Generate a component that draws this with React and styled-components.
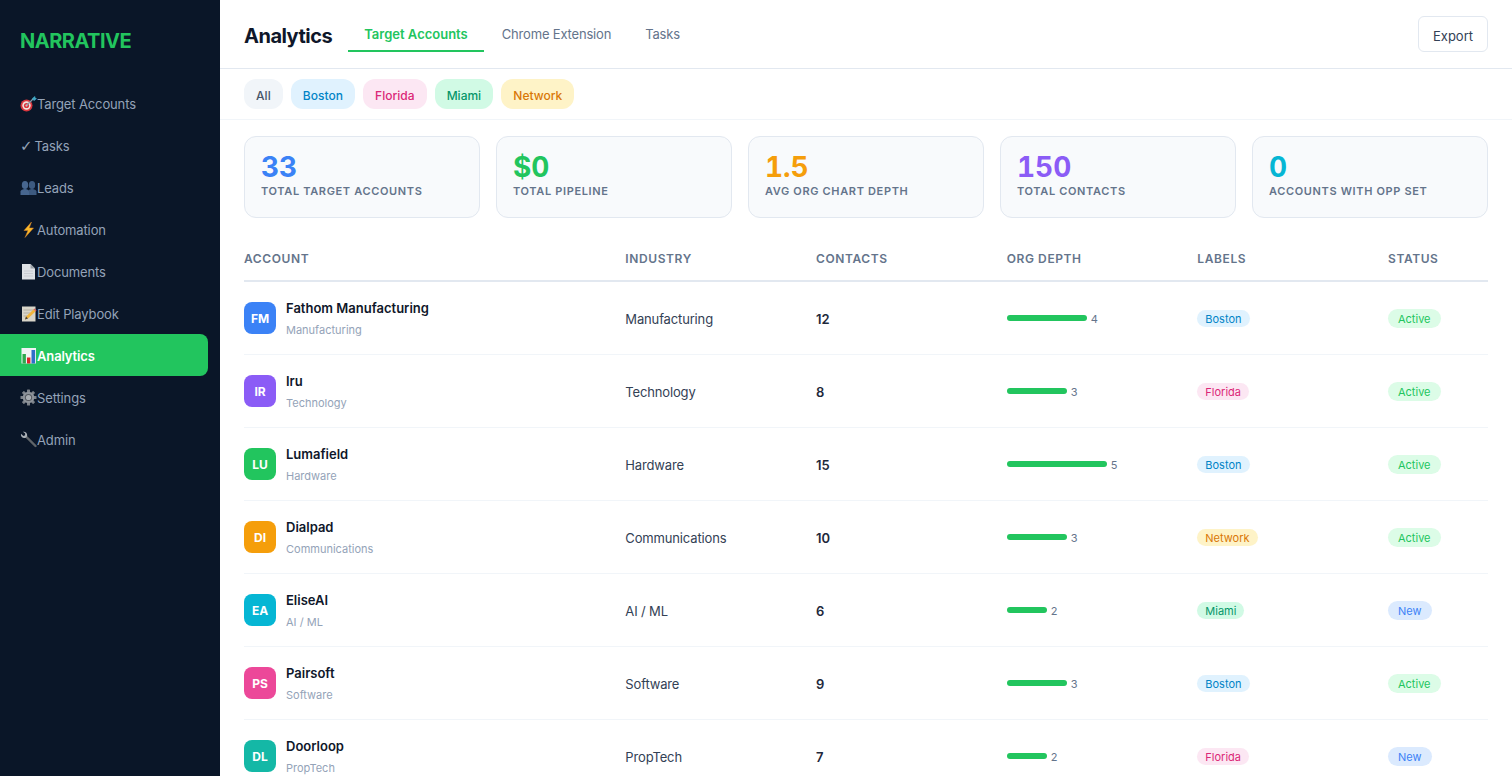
import React from "react";
import styled, { createGlobalStyle } from "styled-components";

const GlobalStyle = createGlobalStyle`
  * { box-sizing: border-box; }
  html, body { margin: 0; padding: 0; height: 100%; overflow: hidden; }
  body {
    font-family: Inter, "Liberation Sans", sans-serif;
    background: #fff;
    color: #0f172a;
  }
`;

const Shell = styled.div`
  display: flex;
  height: 776px;
  overflow: hidden;
`;

const Sidebar = styled.aside`
  width: 220px;
  flex-shrink: 0;
  background: #0a1628;
  padding-top: 24px;
`;

const Logo = styled.div`
  padding: 0 20px;
  height: 34px;
  margin-bottom: 24px;
  display: flex;
  align-items: center;
  font-size: 20px;
  font-weight: 700;
  color: #22c55e;
  letter-spacing: -0.5px;
`;

const NavList = styled.nav`
  display: flex;
  flex-direction: column;
  padding-right: 12px;
`;

const NavItem = styled.a`
  height: 42px;
  padding: 2px 20px 0;
  display: flex;
  align-items: center;
  font-size: 13px;
  letter-spacing: -0.13px;
  font-weight: ${({ $active }) => ($active ? 600 : 400)};
  color: ${({ $active }) => ($active ? "#fff" : "#94a3b8")};
  background: ${({ $active }) => ($active ? "#22c55e" : "transparent")};
  border-radius: ${({ $active }) => ($active ? "0 8px 8px 0" : "0")};
  white-space: pre;
`;

const Emoji = styled.svg`
  width: 17px;
  height: 17px;
  flex-shrink: 0;
  margin-top: -1px;
`;

const Check = styled.span`
  display: inline-block;
  width: 11px;
  font-family: "DejaVu Sans", sans-serif;
  font-size: 15px;
  line-height: 1;
`;

const Main = styled.main`
  flex: 1;
  min-width: 0;
  display: flex;
  flex-direction: column;
`;

const TopBar = styled.header`
  height: 69px;
  flex-shrink: 0;
  display: flex;
  align-items: center;
  padding: 0 24px;
  border-bottom: 1px solid #e2e8f0;
`;

const PageTitle = styled.h1`
  margin: 4px 16px 0 0;
  font-size: 20px;
  line-height: 28px;
  font-weight: 700;
  color: #0f172a;
  letter-spacing: -0.5px;
`;

const Tabs = styled.div`
  display: flex;
  align-self: flex-start;
  margin-top: 17px;
  gap: 2px;
`;

const Tab = styled.div`
  height: 35px;
  padding: 1px 16px 0;
  display: flex;
  align-items: center;
  font-size: 13px;
  letter-spacing: ${({ $active }) => ($active ? "0" : "-0.18px")};
  font-weight: ${({ $active }) => ($active ? 600 : 400)};
  color: ${({ $active }) => ($active ? "#22c55e" : "#64748b")};
  border-bottom: 2px solid ${({ $active }) => ($active ? "#22c55e" : "transparent")};
`;

const ExportButton = styled.button`
  margin-left: auto;
  width: 70px;
  height: 36px;
  padding: 3px 0 0;
  background: #fff;
  border: 1px solid #e2e8f0;
  border-radius: 6px;
  font: 400 13px Inter, sans-serif;
  color: #334155;
`;

const FilterBar = styled.div`
  height: 51px;
  flex-shrink: 0;
  display: flex;
  align-items: center;
  gap: 8px;
  padding: 0 24px;
  border-bottom: 1px solid #f1f5f9;
`;

const palette = {
  All: ["#f1f5f9", "#475569"],
  Boston: ["#e0f2fe", "#0284c7"],
  Florida: ["#fce7f3", "#db2777"],
  Miami: ["#d1fae5", "#059669"],
  Network: ["#fef3c7", "#d97706"],
};

const Chip = styled.div`
  height: 30px;
  padding: 2px 12.1px 0;
  display: flex;
  align-items: center;
  border-radius: 12px;
  font-size: 12px;
  font-weight: 500;
  background: ${({ $tone }) => palette[$tone][0]};
  color: ${({ $tone }) => palette[$tone][1]};
`;

const Content = styled.div`
  padding: 16px 24px 0;
`;

const Stats = styled.section`
  display: grid;
  grid-template-columns: repeat(5, 1fr);
  gap: 16px;
  margin-bottom: 20px;
`;

const StatCard = styled.div`
  height: 82px;
  padding: 14px 16px 0;
  background: #f8fafc;
  border: 1px solid #e2e8f0;
  border-radius: 12px;
`;

const StatValue = styled.div`
  font-size: 28px;
  line-height: 32px;
  font-weight: 700;
  font-variant-numeric: tabular-nums;
  color: ${({ $color }) => $color};
`;

const StatLabel = styled.div`
  font-size: 11px;
  line-height: 16px;
  font-weight: 600;
  letter-spacing: 0.65px;
  color: #64748b;
  text-transform: uppercase;
`;

const gridColumns = "2fr 1fr 1fr 1fr 1fr 100px";

const TableHead = styled.div`
  display: grid;
  grid-template-columns: ${gridColumns};
  height: 44px;
  padding-bottom: 2px;
  align-items: center;
  border-bottom: 2px solid #e2e8f0;
  font-size: 12px;
  font-weight: 600;
  letter-spacing: 0.6px;
  color: #64748b;
  text-transform: uppercase;
`;

const Row = styled.div`
  display: grid;
  grid-template-columns: ${gridColumns};
  height: 73px;
  padding-top: 1px;
  align-items: center;
  border-bottom: 1px solid #f1f5f9;
  font-size: 13px;
  color: #334155;
`;

const AccountCell = styled.div`
  display: flex;
  align-items: center;
  gap: 10px;
  margin-top: -1px;
`;

const Avatar = styled.div`
  width: 32px;
  height: 32px;
  border-radius: 8px;
  display: flex;
  align-items: center;
  justify-content: center;
  padding-top: 1px;
  background: ${({ $color }) => $color};
  color: #fff;
  font-size: 12px;
  font-weight: 700;
`;

const AccountName = styled.div`
  padding-top: 0.5px;
  font-size: 13px;
  line-height: 16px;
  font-weight: 600;
  color: #0f172a;
`;

const AccountSub = styled.div`
  margin-top: 6.5px;
  font-size: 11px;
  line-height: 14px;
  color: #94a3b8;
`;

const Industry = styled.div`
  padding-top: 1px;
  letter-spacing: -0.15px;
`;

const Contacts = styled.div`
  padding-top: 1px;
  font-weight: 600;
  color: #1e293b;
`;

const Depth = styled.div`
  display: flex;
  align-items: center;
  gap: 4px;
`;

const DepthBar = styled.div`
  height: 6px;
  margin-top: -1px;
  border-radius: 3px;
  background: #22c55e;
`;

const DepthValue = styled.span`
  font-size: 11px;
  color: #64748b;
`;

const Pill = styled.span`
  display: flex;
  width: fit-content;
  align-items: center;
  height: 17px;
  padding: 1px 8px 0;
  border-radius: 9px;
  font-size: 11px;
  font-weight: 400;
  background: ${({ $tone }) => palette[$tone][0]};
  color: ${({ $tone }) => palette[$tone][1]};
`;

const StatusPill = styled.span`
  display: flex;
  width: fit-content;
  align-items: center;
  height: 19px;
  padding: 1px 10px 0;
  border-radius: 10px;
  font-size: 11px;
  font-weight: 400;
  background: ${({ $new }) => ($new ? "#dbeafe" : "#dcfce7")};
  color: ${({ $new }) => ($new ? "#3b82f6" : "#22c55e")};
`;

const Dart = () => (
  <Emoji viewBox="0 0 17 17">
    <circle cx="6.5" cy="10.5" r="6" fill="#d9363e" />
    <circle cx="6.5" cy="10.5" r="4.2" fill="#f3e3dc" />
    <circle cx="6.5" cy="10.5" r="2.6" fill="#d9363e" />
    <circle cx="6.5" cy="10.5" r="1" fill="#f3e3dc" />
    <path d="M6.5 10.5 L13 4" stroke="#8a9aa8" strokeWidth="1.2" />
    <path d="M12 3.5 L15 1 L15.5 3 L17 3.5 L14 6 Z" fill="#3fa7c4" />
  </Emoji>
);

const People = () => (
  <Emoji viewBox="0 0 17 17">
    <ellipse cx="12" cy="6" rx="3.2" ry="4" fill="#3d5a80" />
    <path d="M8 16 V12.5 C8 11 10 10 12 10 C14 10 16.5 11 16.5 12.5 V16 Z" fill="#3d5a80" />
    <ellipse cx="5" cy="6" rx="3.2" ry="4" fill="#47668f" />
    <path d="M0.5 16 V12.5 C0.5 11 3 10 5 10 C7 10 9 11 9 12.5 V16 Z" fill="#47668f" />
  </Emoji>
);

const Bolt = () => (
  <Emoji viewBox="0 0 17 17">
    <path d="M11.5 1 L4 9.5 L8 9.5 L5 16.5 L13.5 7 L9.2 7 Z" fill="#f9b92a" stroke="#d9832a" strokeWidth="0.5" />
  </Emoji>
);

const Doc = () => (
  <Emoji viewBox="0 0 17 17">
    <path d="M2 1 H10.5 L15 5.5 V16.5 H2 Z" fill="#dfe2e6" />
    <path d="M10.5 1 L15 5.5 H10.5 Z" fill="#9aa0a7" />
    <path d="M4 8 H13 M4 10.5 H13 M4 13 H13" stroke="#c4c8cd" strokeWidth="0.8" />
  </Emoji>
);

const Memo = () => (
  <Emoji viewBox="0 0 17 17">
    <rect x="2" y="1.5" width="13.5" height="15" fill="#d9d5c9" />
    <path d="M3.5 5 H14 M3.5 8 H10 M3.5 11 H7" stroke="#a9a59a" strokeWidth="0.8" />
    <path d="M5 14.5 L6 11.5 L13.5 4.5 L15.5 6.5 L8 13.5 Z" fill="#f2b53c" />
    <path d="M13.5 4.5 L14.5 3.5 L16.5 5.5 L15.5 6.5 Z" fill="#e0605a" />
    <path d="M5 14.5 L6 11.5 L8 13.5 Z" fill="#4a4038" />
  </Emoji>
);

const BarChart = () => (
  <Emoji viewBox="0 0 17 17">
    <rect x="1.5" y="1" width="14.5" height="15.5" fill="#f1f3f5" />
    <rect x="2.5" y="7" width="3.4" height="9.5" fill="#2fa84f" />
    <rect x="7" y="10.5" width="3.4" height="6" fill="#d9262c" />
    <rect x="11.5" y="3" width="3.6" height="13.5" fill="#2f6fc9" />
  </Emoji>
);

const Gear = () => (
  <Emoji viewBox="0 0 17 17">
    <g fill="#7d8289">
      {[0, 45, 90, 135].map((deg) => (
        <rect key={deg} x="7" y="0.5" width="3" height="16" rx="0.6" transform={`rotate(${deg} 8.5 8.5)`} />
      ))}
    </g>
    <circle cx="8.5" cy="8.5" r="5.8" fill="#8e939a" />
    <circle cx="8.5" cy="8.5" r="3.6" fill="#54585e" />
    <circle cx="8.5" cy="8.5" r="2.6" fill="#a9adb2" />
  </Emoji>
);

const Wrench = () => (
  <Emoji viewBox="0 0 17 17">
    <path d="M6 5.5 L15.5 15" stroke="#5f6469" strokeWidth="2.4" strokeLinecap="round" />
    <path d="M1 2.8 L3.4 5 L5.2 4.2 L5 2.2 L2.8 0.8 C5 0.2 7.4 1.6 7.2 4.4 C7 6.8 3.6 8 1.8 6 C1 5.1 0.8 4 1 2.8 Z" fill="#aab0b6" />
  </Emoji>
);

const navItems = [
  { Icon: Dart, label: "Target Accounts" },
  { label: " Tasks", check: true },
  { Icon: People, label: "Leads" },
  { Icon: Bolt, label: "Automation" },
  { Icon: Doc, label: "Documents" },
  { Icon: Memo, label: "Edit Playbook" },
  { Icon: BarChart, label: "Analytics", active: true },
  { Icon: Gear, label: "Settings" },
  { Icon: Wrench, label: "Admin" },
];

const stats = [
  { value: "33", label: "Total Target Accounts", color: "#3b82f6" },
  { value: "$0", label: "Total Pipeline", color: "#22c55e" },
  { value: "1.5", label: "Avg Org Chart Depth", color: "#f59e0b" },
  { value: "150", label: "Total Contacts", color: "#8b5cf6" },
  { value: "0", label: "Accounts With Opp Set", color: "#06b6d4" },
];

const accounts = [
  { initials: "FM", color: "#3b82f6", name: "Fathom Manufacturing", industry: "Manufacturing", contacts: 12, depth: 4, label: "Boston", status: "Active" },
  { initials: "IR", color: "#8b5cf6", name: "Iru", industry: "Technology", contacts: 8, depth: 3, label: "Florida", status: "Active" },
  { initials: "LU", color: "#22c55e", name: "Lumafield", industry: "Hardware", contacts: 15, depth: 5, label: "Boston", status: "Active" },
  { initials: "DI", color: "#f59e0b", name: "Dialpad", industry: "Communications", contacts: 10, depth: 3, label: "Network", status: "Active" },
  { initials: "EA", color: "#06b6d4", name: "EliseAI", industry: "AI / ML", contacts: 6, depth: 2, label: "Miami", status: "New" },
  { initials: "PS", color: "#ec4899", name: "Pairsoft", industry: "Software", contacts: 9, depth: 3, label: "Boston", status: "Active" },
  { initials: "DL", color: "#14b8a6", name: "Doorloop", industry: "PropTech", contacts: 7, depth: 2, label: "Florida", status: "New" },
];

const App = () => (
  <Shell>
    <GlobalStyle />
    <Sidebar>
      <Logo>NARRATIVE</Logo>
      <NavList>
        {navItems.map(({ Icon, label, active, check }) => (
          <NavItem key={label} $active={active}>
            {Icon && <Icon />}
            {check && <Check>✓</Check>}
            {label}
          </NavItem>
        ))}
      </NavList>
    </Sidebar>
    <Main>
      <TopBar>
        <PageTitle>Analytics</PageTitle>
        <Tabs>
          <Tab $active>Target Accounts</Tab>
          <Tab>Chrome Extension</Tab>
          <Tab>Tasks</Tab>
        </Tabs>
        <ExportButton>Export</ExportButton>
      </TopBar>
      <FilterBar>
        {Object.keys(palette).map((name) => (
          <Chip key={name} $tone={name}>{name}</Chip>
        ))}
      </FilterBar>
      <Content>
        <Stats>
          {stats.map((s) => (
            <StatCard key={s.label}>
              <StatValue $color={s.color}>{s.value}</StatValue>
              <StatLabel>{s.label}</StatLabel>
            </StatCard>
          ))}
        </Stats>
        <TableHead>
          <div>Account</div>
          <div>Industry</div>
          <div>Contacts</div>
          <div>Org Depth</div>
          <div>Labels</div>
          <div>Status</div>
        </TableHead>
        {accounts.map((a) => (
          <Row key={a.name}>
            <AccountCell>
              <Avatar $color={a.color}>{a.initials}</Avatar>
              <div>
                <AccountName>{a.name}</AccountName>
                <AccountSub>{a.industry}</AccountSub>
              </div>
            </AccountCell>
            <Industry>{a.industry}</Industry>
            <Contacts>{a.contacts}</Contacts>
            <Depth>
              <DepthBar style={{ width: a.depth * 20 }} />
              <DepthValue>{a.depth}</DepthValue>
            </Depth>
            <div><Pill $tone={a.label}>{a.label}</Pill></div>
            <div><StatusPill $new={a.status === "New"}>{a.status}</StatusPill></div>
          </Row>
        ))}
      </Content>
    </Main>
  </Shell>
);

export default App;
